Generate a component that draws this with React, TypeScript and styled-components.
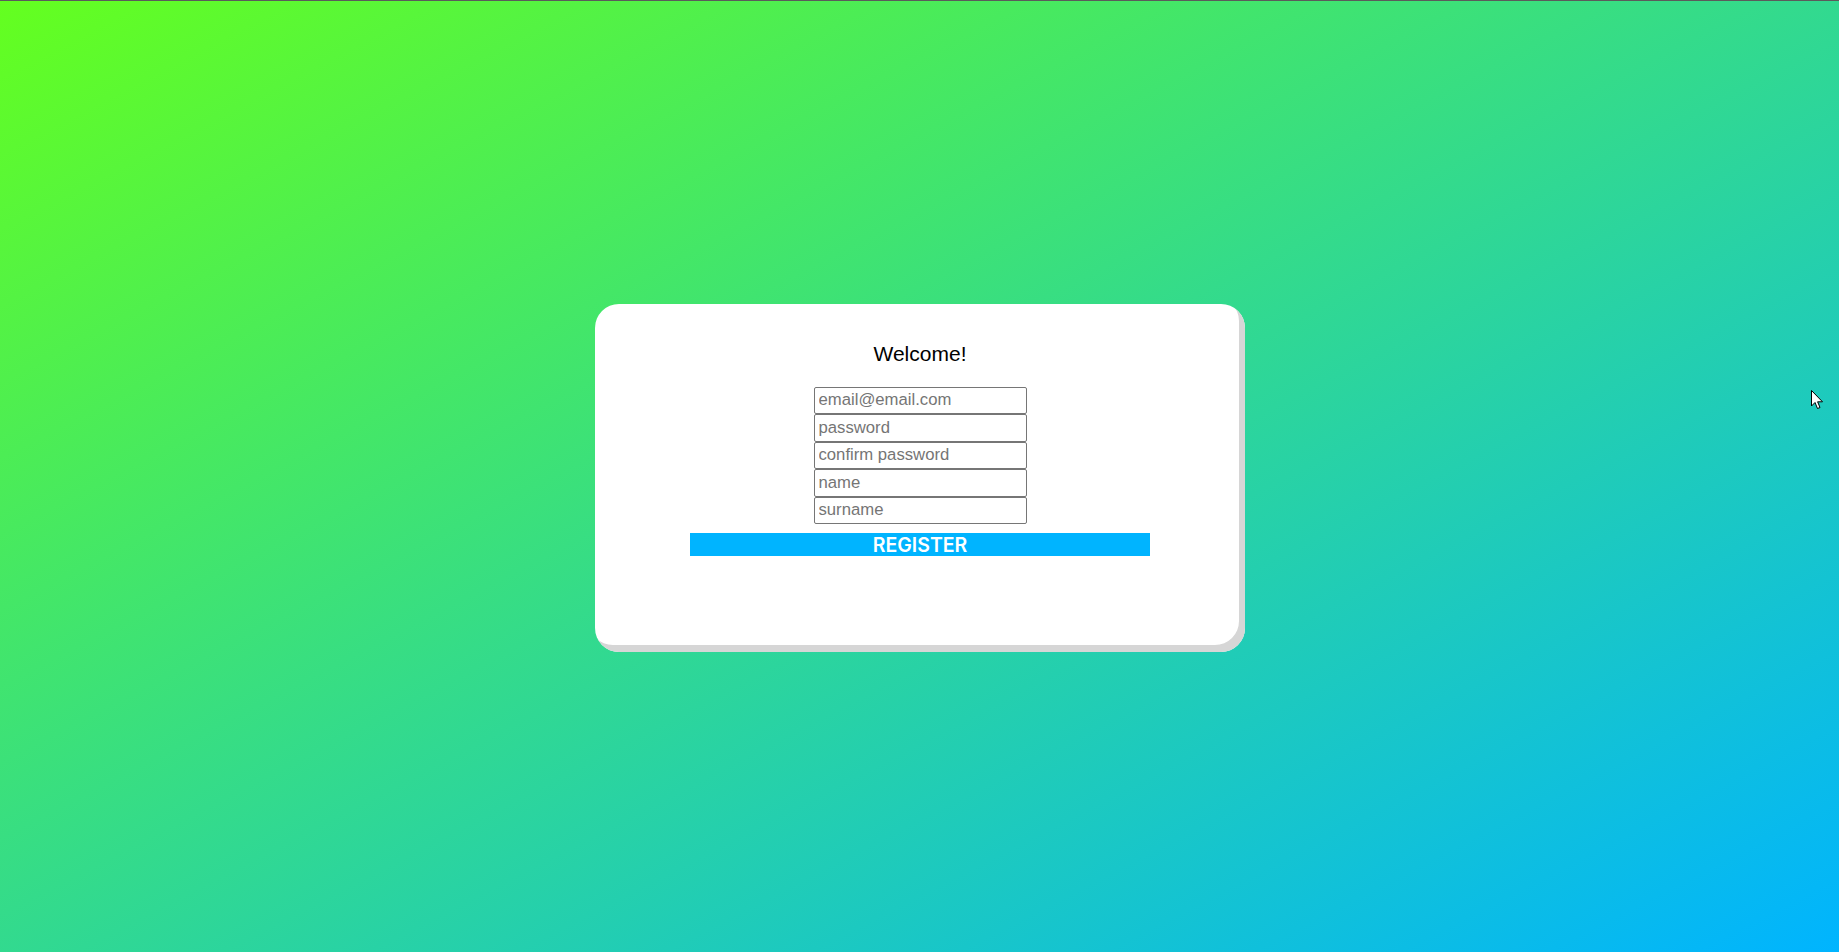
import React from "react";
import styled, { createGlobalStyle } from "styled-components";

const GlobalStyle = createGlobalStyle`
  html, body {
    margin: 0;
    padding: 0;
    height: 100%;
  }
  body {
    font-family: "Liberation Sans", Arial, sans-serif;
    background: linear-gradient(to bottom right, #64ff1f 0%, #00b4ff 100%);
    background-attachment: fixed;
  }
  #root {
    min-height: 100vh;
  }
`;

const Page = styled.main`
  box-sizing: border-box;
  min-height: 100vh;
  border-top: 1px solid #5b5b5b;
  display: flex;
  align-items: center;
  justify-content: center;
  padding-left: 1px;
`;

const Card = styled.section`
  box-sizing: border-box;
  width: 650px;
  height: 348px;
  margin-top: 2px;
  background: #ffffff;
  border-radius: 24px;
  box-shadow: inset -6px -7px 0 #d6d6d6;
  display: flex;
  flex-direction: column;
  align-items: center;
  padding-top: 38px;
`;

const Title = styled.h3`
  margin: 0;
  font-family: "Liberation Sans", Arial, sans-serif;
  font-weight: 400;
  font-size: 21px;
  line-height: 24px;
  color: #000;
`;

const Fields = styled.div`
  display: flex;
  flex-direction: column;
  margin-top: 21px;
`;

const Field = styled.input`
  box-sizing: border-box;
  width: 213px;
  height: 27.5px;
  margin: 0;
  padding: 2px 4px;
  border: 1px solid #767676;
  border-radius: 2px;
  background: #fff;
  font-family: "Liberation Sans", Arial, sans-serif;
  font-size: 16.7px;
  color: #333;
  outline: none;
  &::placeholder {
    color: #757575;
  }
`;

const RegisterButton = styled.button`
  box-sizing: border-box;
  width: 460px;
  height: 23px;
  margin-top: 9px;
  padding: 2px 0 0;
  border: none;
  background: #00b4ff;
  color: #ffffff;
  font-family: Inter, Roboto, sans-serif;
  font-weight: 600;
  font-size: 19.5px;
  line-height: 21px;
  cursor: pointer;
`;

const Cursor = styled.svg`
  position: fixed;
  left: 1811px;
  top: 390px;
  width: 13px;
  height: 20px;
  pointer-events: none;
`;

export default function App() {
  return (
    <>
      <GlobalStyle />
      <Page>
        <Card>
          <Title>Welcome!</Title>
          <Fields>
            <Field type="email" placeholder="email@email.com" />
            <Field type="password" placeholder="password" />
            <Field type="password" placeholder="confirm password" />
            <Field type="text" placeholder="name" />
            <Field type="text" placeholder="surname" />
          </Fields>
          <RegisterButton type="button">REGISTER</RegisterButton>
        </Card>
      </Page>
      <Cursor viewBox="0 0 13 20">
        <path
          d="M0.5 0.5 L0.5 16 L4 12.5 L6.5 18.5 L9 17.5 L6.6 11.8 L11.5 11.8 Z"
          fill="#ffffff"
          stroke="#000000"
          strokeWidth="1"
          strokeLinejoin="miter"
        />
      </Cursor>
    </>
  );
}
